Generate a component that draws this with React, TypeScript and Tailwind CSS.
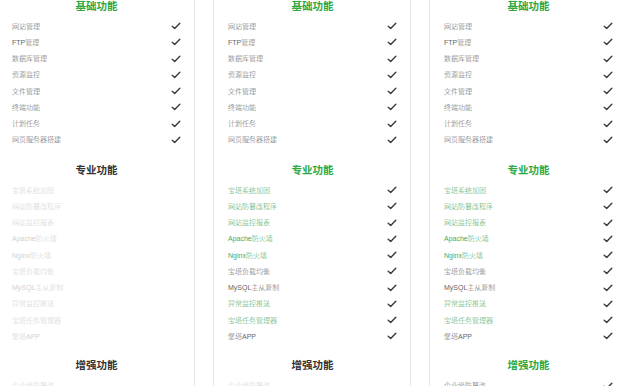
import React from "react";

type Item = { t: string; c: "g" | "d" | "l"; check: boolean };

const basic = ["网站管理", "FTP管理", "数据库管理", "资源监控", "文件管理", "终端功能", "计划任务", "网页服务器搭建"];
const pro = [
  { t: "宝塔系统加固", g: true },
  { t: "网站防篡改程序", g: true },
  { t: "网站监控报表", g: true },
  { t: "Apache防火墙", g: true },
  { t: "Nginx防火墙", g: true },
  { t: "宝塔负载均衡", g: false },
  { t: "MySQL主从复制", g: false },
  { t: "异常监控推送", g: true },
  { t: "宝塔任务管理器", g: true },
  { t: "堡塔APP", g: false },
];

function Check() {
  return (
    <svg width="10" height="8" viewBox="0 0 10 8" className="shrink-0">
      <path d="M1.2 4.3 L3.7 6.5 L8.8 1.3" fill="none" stroke="#3a3a3a" strokeWidth="1.4" strokeLinecap="round" strokeLinejoin="round" />
    </svg>
  );
}

function Row({ item }: { item: Item }) {
  const color = item.c === "g" ? "text-[#4aa860]" : item.c === "d" ? "text-[#666]" : "text-[#d2d2d2]";
  return (
    <div className="h-[16.25px] flex items-center justify-between">
      <span className={`text-[7px] leading-none font-light ${color}`}>{item.t}</span>
      {item.check && <Check />}
    </div>
  );
}

function Title({ text, green }: { text: string; green: boolean }) {
  return (
    <div className={`h-[23px] flex items-center justify-center text-[10.5px] font-bold ${green ? "text-[#2aa844]" : "text-[#333]"}`}>
      {text}
    </div>
  );
}

function Column({ level }: { level: number }) {
  const basicItems: Item[] = basic.map((t) => ({ t, c: "d", check: true }));
  const proItems: Item[] = pro.map((p) =>
    level >= 2 ? { t: p.t, c: p.g ? "g" : "d", check: true } : { t: p.t, c: "l", check: false }
  );
  const enh: Item[] = [
    level >= 3 ? { t: "企业级防篡改", c: "d", check: true } : { t: "企业级防篡改", c: "l", check: false },
  ];
  return (
    <div className="w-[198px] shrink-0 border-x border-[#e8e8e8] bg-white">
      <div className="pl-[14px] pr-[13px]">
        <div className="-mt-[5px]">
          <Title text="基础功能" green />
          {basicItems.map((i) => (
            <Row key={i.t} item={i} />
          ))}
        </div>
        <div className="mt-[11px]">
          <Title text="专业功能" green={level >= 2} />
          {proItems.map((i) => (
            <Row key={i.t} item={i} />
          ))}
        </div>
        <div className="mt-[10px]">
          <Title text="增强功能" green={level >= 3} />
          {enh.map((i) => (
            <Row key={i.t} item={i} />
          ))}
        </div>
      </div>
    </div>
  );
}

export default function App() {
  return (
    <div
      className="w-[626px] h-[386px] overflow-hidden bg-white"
      style={{ fontFamily: '"Liberation Sans", "Noto Sans CJK SC", sans-serif' }}
    >
      <div className="flex gap-[18px] -ml-[3px]">
        <Column level={1} />
        <Column level={2} />
        <Column level={3} />
      </div>
    </div>
  );
}
